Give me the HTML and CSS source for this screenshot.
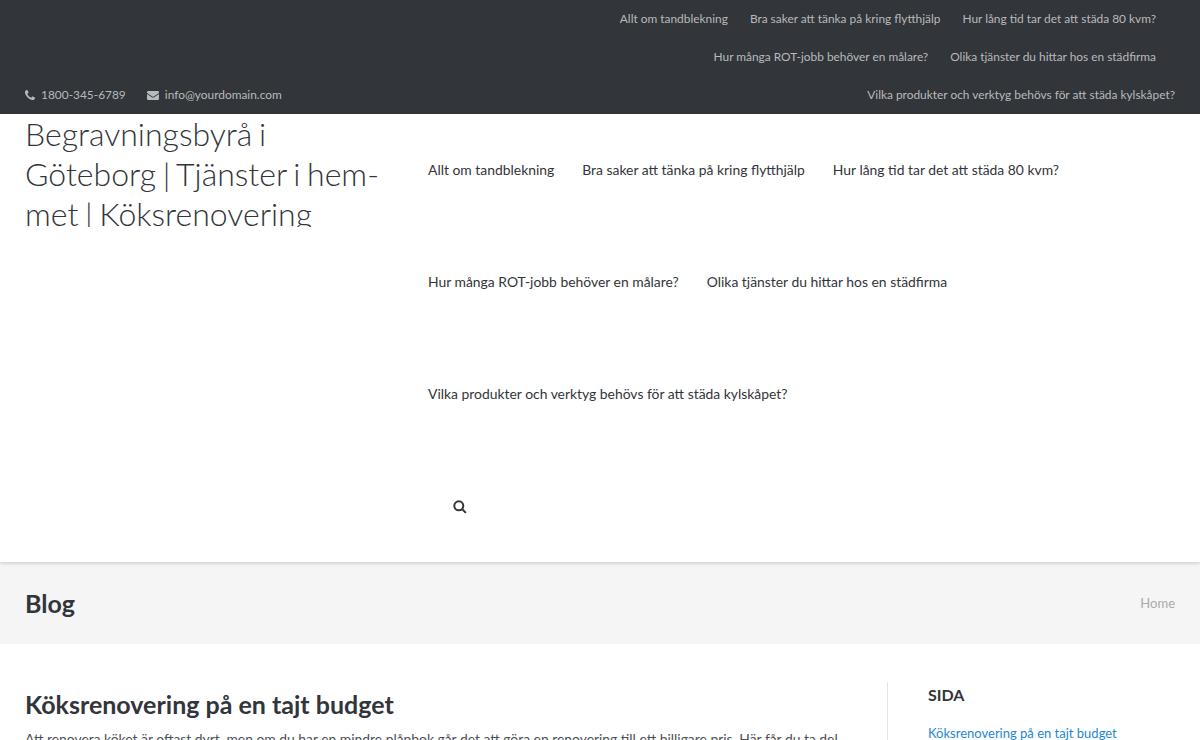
FILE: index.html
```html
<!DOCTYPE html>
<html lang="en">
<head>
    <meta charset="UTF-8">
    <meta name="viewport" content="width=device-width, initial-scale=1.0">
    <title>Blog</title>
    <link rel="stylesheet" href="styles.css">
</head>
<body>

    <!-- Top bar -->
    <div class="topbar">
        <ul class="contact">
            <li>
                <svg class="contact-icon" viewBox="0 0 1408 1408"><path d="M1408 1112q0 27-10 70.500t-21 68.500q-21 50-122 106-94 51-186 51-27 0-53-3.500t-57.500-12.500-47-14.500-55.500-20.500-49-18q-98-35-175-83-127-79-264-216t-216-264q-48-77-83-175-3-9-18-49t-20.500-55.500-14.500-47-12.500-57.500-3.500-53q0-92 51-186 56-101 106-122 25-11 68.500-21t70.500-10q14 0 21 3 18 6 53 76 11 19 30 54t35 63.500 31 53.500q3 4 17.500 25t21.500 35.500 7 28.500q0 20-28.500 50t-62 55-62 53-28.500 46q0 9 5 22.500t8.500 20.500 14 24 11.500 19q76 137 174 235t235 174q2 1 19 11.500t24 14 20.500 8.500 22.500 5q18 0 46-28.500t53-62 55-62 50-28.500q14 0 28.500 7t35.500 21.500 25 17.500q25 15 53.500 31t63.500 35 54 30q70 35 76 53 3 7 3 21z"/></svg>
                1800-345-6789
            </li>
            <li>
                <svg class="contact-icon mail" viewBox="0 0 24 18"><path d="M0 2.500C0 1 1 0 2.500 0h19C23 0 24 1 24 2.500c0 1-.6 1.800-1.400 2.400L13.400 11c-.9.600-1.900.600-2.800 0L1.400 4.900C.6 4.300 0 3.500 0 2.500zM0 6.200l9.800 6.500c1.400.9 3 .9 4.400 0L24 6.200v9.300c0 1.400-1.100 2.500-2.500 2.500h-19C1.100 18 0 16.900 0 15.500z"/></svg>
                info@yourdomain.com
            </li>
        </ul>
        <ul class="top-menu">
            <li>Allt om tandblekning</li>
            <li>Bra saker att tänka på kring flytthjälp</li>
            <li>Hur lång tid tar det att städa 80 kvm?</li>
            <li>Hur många ROT-jobb behöver en målare?</li>
            <li>Olika tjänster du hittar hos en städfirma</li>
            <li>Vilka produkter och verktyg behövs för att städa kylskåpet?</li>
        </ul>
    </div>

    <!-- Header -->
    <header class="site-header">
        <div class="logo">Begravningsbyrå i Göteborg | Tjänster i hem&shy;met | Köksrenovering</div>
        <nav class="main-nav">
            <ul class="nav-list">
                <li>Allt om tandblekning</li>
                <li>Bra saker att tänka på kring flytthjälp</li>
                <li>Hur lång tid tar det att städa 80 kvm?</li>
                <li>Hur många ROT-jobb behöver en målare?</li>
                <li>Olika tjänster du hittar hos en städfirma</li>
                <li>Vilka produkter och verktyg behövs för att städa kylskåpet?</li>
            </ul>
            <div class="nav-search">
                <svg class="search-icon" viewBox="0 0 14 14"><circle cx="5.800" cy="5.800" r="4.500"/><path d="M9.200 9.200l3.700 3.700"/></svg>
            </div>
        </nav>
    </header>

    <!-- Page title -->
    <div class="page-title">
        <h1>Blog</h1>
        <span class="crumb">Home</span>
    </div>

    <!-- Content -->
    <div class="content">
        <main class="posts">
            <h2>Köksrenovering på en tajt budget</h2>
            <p>Att renovera köket är oftast dyrt, men om du har en mindre plånbok går det att göra en renovering till ett billigare pris. Här får du ta del</p>
        </main>
        <aside class="sidebar">
            <h3>Sida</h3>
            <a href="#">Köksrenovering på en tajt budget</a>
        </aside>
    </div>

</body>
</html>
```

FILE: styles.css
```css
html {
    overflow: hidden;
}
body {
    margin: 0;
    background-color: #fff;
    color: #32353a;
    font-family: Lato, 'Open Sans', sans-serif;
    font-size: 14px;
}
ul {
    list-style: none;
    margin: 0;
    padding: 0;
}

/* Top bar */
.topbar {
    display: flex;
    justify-content: space-between;
    align-items: flex-end;
    padding: 0 25px;
    background-color: #32353a;
    color: #b9babc;
    font-size: 11.900px;
    line-height: 38px;
}
.contact {
    display: flex;
    gap: 21px;
}
.contact-icon {
    width: 10px;
    height: 10px;
    margin-right: 3px;
    fill: #b9babc;
    vertical-align: -1px;
}
.contact-icon.mail {
    width: 12px;
    height: 9px;
}
.top-menu {
    display: flex;
    flex-wrap: wrap;
    justify-content: flex-end;
    width: 600px;
}
.top-menu li {
    margin-left: 3px;
    margin-right: 19px;
}
.top-menu li:last-child {
    margin-right: 0;
}

/* Header */
.site-header {
    display: flex;
    position: relative;
    height: 448px;
    padding-left: 25px;
    box-shadow: 0 1px 4px rgba(0, 0, 0, 0.2);
}
.logo {
    width: 389px;
    height: 113px;
    padding-right: 25px;
    box-sizing: border-box;
    flex-shrink: 0;
    overflow: hidden;
    hyphens: manual;
    font-size: 32px;
    font-weight: 300;
    line-height: 40px;
    word-spacing: -2px;
    color: #32353a;
}
.main-nav {
    flex: 1;
    padding-right: 25px;
}
.nav-list {
    display: flex;
    flex-wrap: wrap;
}
.nav-list li {
    padding: 0 14px;
    line-height: 112px;
    font-size: 13.900px;
}
.nav-search {
    display: flex;
    align-items: center;
    height: 112px;
    padding-left: 39px;
}
.search-icon {
    width: 14px;
    height: 14px;
    margin-top: 2px;
    fill: none;
    stroke: #32353a;
    stroke-width: 2;
}

/* Page title */
.page-title {
    display: flex;
    justify-content: space-between;
    align-items: center;
    height: 82px;
    padding: 0 25px;
    background-color: #f5f5f5;
}
.page-title h1 {
    margin: 0;
    font-size: 25px;
    font-weight: 700;
}
.crumb {
    font-size: 13px;
    color: #a9aaab;
}

/* Content */
.content {
    display: flex;
    padding: 38px 25px 0;
}
.posts {
    width: 862px;
    padding-right: 25px;
    box-sizing: border-box;
}
.posts h2 {
    margin: 7px 0 0;
    font-size: 25px;
    font-weight: 700;
    line-height: 30px;
}
.posts p {
    margin: 8px 0 0;
    font-size: 13.860px;
    line-height: 24px;
    white-space: nowrap;
    color: #4d5055;
}
.sidebar {
    flex: 1;
    padding-left: 40px;
    border-left: 1px solid #e5e5e5;
}
.sidebar h3 {
    margin: 0 0 17px;
    font-size: 16px;
    font-weight: 700;
    line-height: 26px;
    text-transform: uppercase;
}
.sidebar a {
    display: block;
    font-size: 13px;
    color: #1e88d2;
    text-decoration: none;
}
```
